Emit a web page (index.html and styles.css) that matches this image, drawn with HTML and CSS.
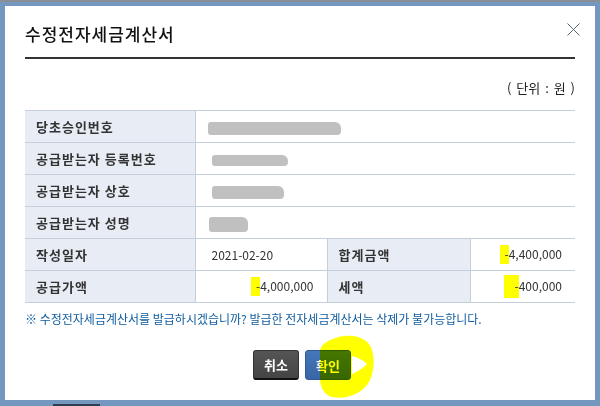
FILE: index.html
```html
<!DOCTYPE html>
<html>
<head>
    <title>수정전자세금계산서</title>
    <link rel="stylesheet" href="styles.css">
</head>
<body>
    <div class="topline"></div>
    <div class="dialog">
        <div class="head">
            <h1 class="title">수정전자세금계산서</h1>
            <button class="close" aria-label="닫기">
                <svg width="13" height="13" viewBox="0 0 13 13">
                    <path d="M0.5 0.5 L12.5 12.5 M12.5 0.5 L0.5 12.5" stroke="#5a6278" stroke-width="1" fill="none"/>
                </svg>
            </button>
        </div>

        <p class="unit">( 단위 : 원 )</p>

        <table class="info">
            <colgroup>
                <col class="c-label">
                <col class="c-value">
                <col class="c-label2">
                <col class="c-value2">
            </colgroup>
            <tr>
                <th>당초승인번호</th>
                <td colspan="3"><span class="redact r1"></span></td>
            </tr>
            <tr>
                <th>공급받는자 등록번호</th>
                <td colspan="3"><span class="redact r2"></span></td>
            </tr>
            <tr>
                <th>공급받는자 상호</th>
                <td colspan="3"><span class="redact r3"></span></td>
            </tr>
            <tr>
                <th>공급받는자 성명</th>
                <td colspan="3"><span class="redact r4"></span></td>
            </tr>
            <tr>
                <th>작성일자</th>
                <td>2021-02-20</td>
                <th>합계금액</th>
                <td class="num"><span class="mark">-</span>4,400,000</td>
            </tr>
            <tr>
                <th>공급가액</th>
                <td class="num"><span class="mark">-</span>4,000,000</td>
                <th>세액</th>
                <td class="num"><span class="mark mark-big">-</span>400,000</td>
            </tr>
        </table>

        <p class="notice">※ 수정전자세금계산서를 발급하시겠습니까? 발급한 전자세금계산서는 삭제가 불가능합니다.</p>

        <div class="buttons">
            <button class="btn btn-cancel">취소</button>
            <button class="btn btn-ok">확인</button>
            <svg class="scribble" width="62" height="68" viewBox="0 0 62 68">
                <path fill-rule="evenodd" fill="#ffff00"
                      d="M18 5 C28 0 46 0 54 10 C60 18 60 34 55 46 C49 59 32 66 17 63 C9 61 5 53 5 44 L5 16 C7 10 12 7 18 5 Z
                         M37 22 C42 23 48 26 52 30 C48 34 42 38 37 40 Z"/>
            </svg>
        </div>
    </div>
    <div class="taskbar"><span class="task"></span></div>
</body>
</html>
```

FILE: styles.css
```css
body {
    margin: 0;
    background: #7497c0;
    font-family: "Noto Sans CJK KR", "Noto Sans", sans-serif;
    color: #333;
}
.topline {
    height: 2px;
    background: #8a8e96;
}
.dialog {
    position: relative;
    margin: 4px 5px 0;
    height: 394px;
    padding: 0 20px;
    background: #fff;
    box-sizing: border-box;
}
.head {
    padding: 17px 0 12px;
    border-bottom: 2px solid #333;
}
.title {
    margin: 0;
    font-size: 17px;
    line-height: 22px;
    font-weight: 500;
    letter-spacing: 1px;
    color: #111;
}
.close {
    position: absolute;
    top: 17px;
    right: 15px;
    padding: 0;
    border: none;
    background: none;
    line-height: 0;
    cursor: pointer;
}
.unit {
    margin: 21px 0 14px;
    font-size: 13px;
    line-height: 16px;
    word-spacing: 2px;
    text-align: right;
    color: #222;
}
.info {
    width: 100%;
    border-collapse: collapse;
    table-layout: fixed;
    font-size: 12px;
}
.c-label { width: 170px; }
.c-value { width: 132px; }
.c-label2 { width: 143px; }
.info tr {
    height: 32px;
}
.info th,
.info td {
    padding: 0;
    border-top: 1px solid #c5cfdc;
    border-bottom: 1px solid #c5cfdc;
    border-left: 1px solid #c5cfdc;
}
.info tr > :first-child {
    border-left: none;
}
.info th {
    padding-left: 11px;
    background: #e8ecf5;
    font-size: 13px;
    font-weight: bold;
    letter-spacing: 1px;
    text-align: left;
    color: #333;
}
.info td {
    padding-left: 16px;
    color: #333;
}
.info td.num {
    padding: 0 13px 0 0;
    text-align: right;
}
.mark {
    display: inline-block;
    padding: 2px 0 4px 5px;
    line-height: 13px;
    background: #ffff00;
}
.mark-big {
    padding: 4px 0 6px 11px;
}
.redact {
    display: inline-block;
    height: 13px;
    vertical-align: middle;
    background: #c0c0c0;
    border-radius: 3px 6px 4px 3px;
}
.r1 { width: 133px; margin-left: -4px; }
.r2 { width: 76px; height: 11px; }
.r3 { width: 72px; }
.r4 { width: 39px; height: 15px; margin-left: -3px; }
.notice {
    margin: 8px 0 0;
    font-size: 12px;
    line-height: 16px;
    color: #0f5c9e;
}
.buttons {
    position: relative;
    display: flex;
    justify-content: center;
    gap: 6px;
    margin-top: 23px;
    padding-left: 4px;
}
.btn {
    width: 46px;
    height: 30px;
    padding: 0;
    border-radius: 3px;
    font-family: inherit;
    font-size: 13px;
    font-weight: bold;
    color: #fff;
    cursor: pointer;
}
.btn-cancel {
    background: linear-gradient(#555, #444);
    border: 1px solid #333;
    border-bottom: 2px solid #111;
}
.btn-ok {
    background: linear-gradient(#4577b8, #3866a6);
    border: 1px solid #2f5a94;
}
.scribble {
    position: absolute;
    left: 290px;
    top: -16px;
    mix-blend-mode: multiply;
}
.taskbar {
    height: 6px;
}
.task {
    display: block;
    width: 47px;
    height: 2px;
    margin: 4px 0 0 53px;
    background: #2f3d52;
}
```
